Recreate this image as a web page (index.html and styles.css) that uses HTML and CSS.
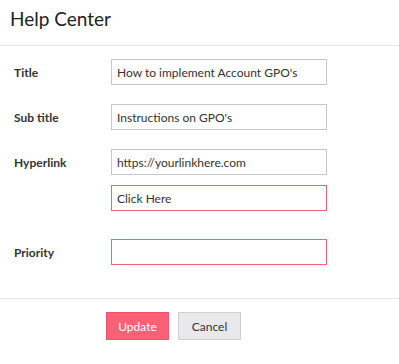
FILE: index.html
```html
<!DOCTYPE html>
<html>
<head>
<meta charset="utf-8">
<link rel="stylesheet" href="styles.css">
</head>
<body>
<div class="modal">
  <div class="modal-header">
    <h1 class="modal-title">Help Center</h1>
  </div>
  <form class="modal-body">
    <div class="row">
      <label class="label">Title</label>
      <input class="field" type="text" value="How to implement Account GPO's">
    </div>
    <div class="row">
      <label class="label">Sub title</label>
      <input class="field" type="text" value="Instructions on GPO's">
    </div>
    <div class="row row-tight">
      <label class="label">Hyperlink</label>
      <input class="field" type="text" value="https://yourlinkhere.com">
    </div>
    <div class="row row-wide">
      <span class="label"></span>
      <input class="field field-error" type="text" value="Click Here">
    </div>
    <div class="row">
      <label class="label">Priority</label>
      <input class="field field-error" type="text" value="">
    </div>
  </form>
  <div class="modal-footer">
    <button class="btn btn-primary" type="button">Update</button>
    <button class="btn btn-default" type="button">Cancel</button>
  </div>
</div>
</body>
</html>
```
FILE: styles.css
```css
* { box-sizing: border-box; }
html, body { margin: 0; padding: 0; background: #fff; }
body { font-family: Lato, "Open Sans", sans-serif; color: #333; }

.modal { width: 399px; }

.modal-header {
  height: 46px;
  padding: 6px 10px 0;
  border-bottom: 1px solid #e5e5e5;
}
.modal-title {
  margin: 0;
  font-size: 19px;
  font-weight: 400;
  line-height: 26px;
  color: #222;
}

.modal-body {
  display: flex;
  flex-direction: column;
  gap: 19px;
  padding: 13px 0 0 14px;
  height: 253px;
  border-bottom: 1px solid #e5e5e5;
}
.row {
  display: flex;
  align-items: center;
}
.row-tight { margin-bottom: -9px; }
.row-wide { margin-bottom: 9px; }

.label {
  width: 97px;
  font-size: 12px;
  font-weight: 700;
  color: #333;
}
.field {
  width: 216px;
  height: 26px;
  margin: 0;
  padding: 0 5px;
  border: 1px solid #c6c6c6;
  border-radius: 0;
  font-family: Lato, "Open Sans", sans-serif;
  font-size: 12px;
  color: #333;
  background: #fff;
  outline: none;
}
.field-error { border-color: #f06478; }

.modal-footer {
  display: flex;
  gap: 9px;
  padding: 13px 0 0 106px;
}
.btn {
  height: 28px;
  width: 63px;
  padding: 0;
  font-family: Lato, "Open Sans", sans-serif;
  font-size: 12px;
  border-radius: 0;
  cursor: pointer;
}
.btn-primary {
  background: #fb6077;
  border: 1px solid #ef566d;
  color: #fff;
}
.btn-default {
  background: #e9e9eb;
  border: 1px solid #cfcfd1;
  color: #333;
}
```
